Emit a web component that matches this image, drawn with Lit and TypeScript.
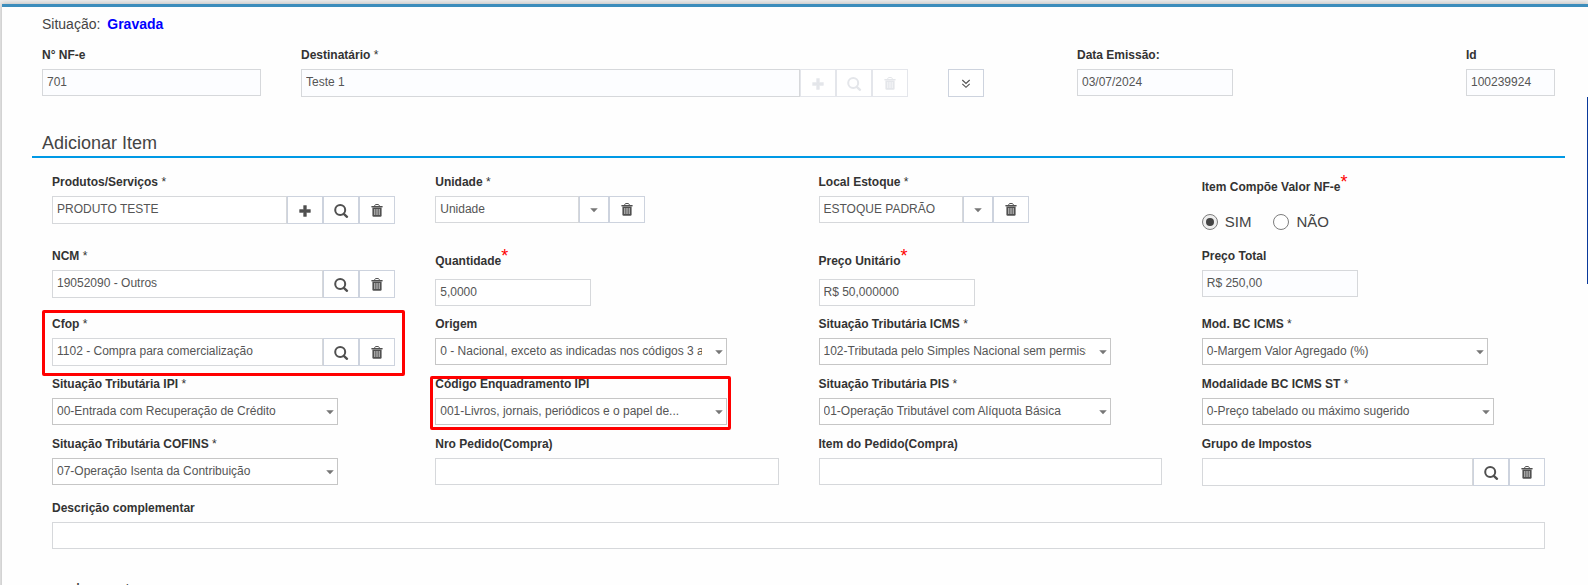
import { LitElement, html, css, svg, nothing, TemplateResult } from "lit";
import { customElement } from "lit/decorators.js";
import { classMap } from "lit/directives/class-map.js";

type IconName = "plus" | "search" | "trash" | "caret" | "down";

const icons: Record<IconName, TemplateResult> = {
  plus: svg`<path d="M6.6 2.6h2.8v4h4v2.8h-4v4H6.6v-4h-4V6.6h4z" fill="currentColor" stroke="currentColor" stroke-width=".5" stroke-linejoin="round"/>`,
  search: svg`<circle cx="7.2" cy="7" r="5" fill="none" stroke="currentColor" stroke-width="2"/><path d="M10.8 10.8l3.2 3" stroke="currentColor" stroke-width="2.4" stroke-linecap="round"/>`,
  trash: svg`<path d="M5.6 3.2C5.6 1.8 6.4 1.5 8 1.5s2.4.3 2.4 1.7" fill="none" stroke="currentColor" stroke-width="1"/><path d="M2.4 3h11.2v1.4H2.4z" fill="currentColor"/><path d="M3.4 4.4h9.2v8.2q0 1.2-1.2 1.2H4.6q-1.2 0-1.2-1.2z" fill="currentColor"/><path d="M5.6 6v6M7.2 6v6M8.8 6v6M10.4 6v6" stroke="#fff" stroke-width=".7" opacity=".8"/>`,
  caret: svg`<path d="M4.2 6.2h7.6L8 10.2z" fill="currentColor"/>`,
  down: svg`<path d="M4.3 4l3.7 3.5L11.7 4M4.3 7.8l3.7 3.5 3.7-3.5" fill="none" stroke="currentColor" stroke-width="1.1"/>`,
};

const icon = (name: IconName) =>
  html`<svg class="icon" viewBox="0 0 16 16" aria-hidden="true">${icons[name]}</svg>`;

const names: Record<IconName, string> = {
  plus: "Adicionar",
  search: "Pesquisar",
  trash: "Limpar",
  caret: "Abrir lista",
  down: "Mais detalhes",
};

interface Field {
  id: string;
  label: string;
  value?: string;
  star?: "plain" | "red";
  kind?: "text" | "select" | "radio";
  size?: string;
  buttons?: IconName[];
  readonly?: boolean;
  disabled?: boolean;
  mark?: "wide" | "tight";
}

const header: Field[] = [
  { id: "nfe", label: "N° NF-e", value: "701", readonly: true },
  { id: "dest", label: "Destinatário", star: "plain", value: "Teste 1", readonly: true, disabled: true, buttons: ["plus", "search", "trash"] },
  { id: "data", label: "Data Emissão:", value: "03/07/2024", readonly: true, size: "short" },
  { id: "id", label: "Id", value: "100239924", readonly: true },
];

const fields: Field[] = [
  { id: "produto", label: "Produtos/Serviços", star: "plain", value: "PRODUTO TESTE", buttons: ["plus", "search", "trash"] },
  { id: "unidade", label: "Unidade", star: "plain", value: "Unidade", size: "combo", buttons: ["caret", "trash"] },
  { id: "local", label: "Local Estoque", star: "plain", value: "ESTOQUE PADRÃO", size: "combo", buttons: ["caret", "trash"] },
  { id: "compoe", label: "Item Compõe Valor NF-e", star: "red", kind: "radio" },
  { id: "ncm", label: "NCM", star: "plain", value: "19052090 - Outros", buttons: ["search", "trash"] },
  { id: "qtd", label: "Quantidade", star: "red", value: "5,0000", size: "short" },
  { id: "preco", label: "Preço Unitário", star: "red", value: "R$ 50,000000", size: "short" },
  { id: "total", label: "Preço Total", value: "R$ 250,00", size: "short", readonly: true },
  { id: "cfop", label: "Cfop", star: "plain", value: "1102 - Compra para comercialização", buttons: ["search", "trash"], mark: "wide" },
  { id: "origem", label: "Origem", kind: "select", size: "large", value: "0 - Nacional, exceto as indicadas nos códigos 3 a 5" },
  { id: "icms", label: "Situação Tributária ICMS", star: "plain", kind: "select", size: "large", value: "102-Tributada pelo Simples Nacional sem permissão de crédito" },
  { id: "modbc", label: "Mod. BC ICMS", star: "plain", kind: "select", size: "medium", value: "0-Margem Valor Agregado (%)" },
  { id: "ipi", label: "Situação Tributária IPI", star: "plain", kind: "select", size: "medium", value: "00-Entrada com Recuperação de Crédito" },
  { id: "enq", label: "Código Enquadramento IPI", kind: "select", size: "large", value: "001-Livros, jornais, periódicos e o papel de...", mark: "tight" },
  { id: "pis", label: "Situação Tributária PIS", star: "plain", kind: "select", size: "large", value: "01-Operação Tributável com Alíquota Básica" },
  { id: "modst", label: "Modalidade BC ICMS ST", star: "plain", kind: "select", size: "large", value: "0-Preço tabelado ou máximo sugerido" },
  { id: "cofins", label: "Situação Tributária COFINS", star: "plain", kind: "select", size: "medium", value: "07-Operação Isenta da Contribuição" },
  { id: "pedido", label: "Nro Pedido(Compra)" },
  { id: "itempedido", label: "Item do Pedido(Compra)" },
  { id: "grupo", label: "Grupo de Impostos", buttons: ["search", "trash"] },
];

@customElement("app-root")
export class AppRoot extends LitElement {
  static styles = css`
    :host {
      display: block;
      box-sizing: border-box;
      position: relative;
      height: 100vh;
      overflow: hidden;
      padding: 4px 0 0 2px;
      background: #ececec;
      color: #333;
      font: 12px/16px "Liberation Sans", Arial, sans-serif;
    }
    * { box-sizing: border-box; }
    .panel {
      min-height: 100%;
      border-top: 3px solid #3c8dbc;
      background: #fefefe;
      box-shadow: 0 0 5px rgba(0, 0, 0, 0.25);
      padding: 7px 23px 0 30px;
    }
    .status { margin: 0 10px; font-size: 14px; line-height: 20px; color: #444; }
    .status strong { color: #0000ff; margin-left: 3px; }
    .head {
      display: grid;
      grid-template-columns: 259fr 647fr 129fr 389fr 89fr;
      margin: 13px 10px 0;
    }
    .head > .field:nth-child(-n + 2) { padding-right: 40px; }
    .toggle { padding-top: 22px; }
    .title {
      margin: 34px 0 0;
      padding: 0 10px 1px;
      border-bottom: 2px solid #0099e5;
      font-size: 18px;
      line-height: 24px;
      font-weight: 400;
      color: #444;
    }
    .grid {
      display: grid;
      grid-template-columns: repeat(4, minmax(0, 1fr));
      gap: 10px 40px;
      grid-auto-rows: minmax(50px, auto);
      margin: 16px 20px 14px;
    }
    .notes { margin: 0 20px; }
    .field { position: relative; display: flex; flex-direction: column; gap: 6px; min-width: 0; }
    .caption { display: flex; }
    .caption.raised { height: 25px; }
    .name { font-weight: 700; }
    .name.low { padding-top: 5px; }
    .plain { font-weight: 400; }
    .red { color: #f00; font-size: 18px; }
    .group { display: flex; }
    .text, .select {
      flex: 1;
      width: 100%;
      min-width: 0;
      height: 27px;
      margin: 0;
      padding: 0 4px 2px;
      border: 1px solid #d6d8db;
      border-radius: 0;
      background: #fff;
      color: #555;
      font: inherit;
      outline: none;
    }
    .tall .text { height: 28px; }
    .text.locked { background: #fcfdff; }
    .combo .text { flex: none; width: 144px; height: 27px; }
    .combo .btn { height: 27px; }
    .short { max-width: 156px; }
    .medium { max-width: 286px; }
    .large { max-width: 292px; }
    .select { appearance: none; grid-area: 1 / 1; border-color: #c6c6c6; padding-right: 24px; }
    .pick { display: grid; align-items: center; color: #777; }
    .pick .icon { grid-area: 1 / 1; justify-self: end; pointer-events: none; }
    .btn {
      flex: none;
      display: flex;
      align-items: center;
      justify-content: center;
      width: 36px;
      height: 28px;
      padding: 1px 0 0;
      border: 1px solid #cdd3de;
      border-radius: 0;
      background: #fff;
      color: #505050;
    }
    .btn.caret { width: 30px; color: #777; }
    .btn:disabled { color: #e4e6ea; border-color: #e4e6eb; }
    .icon { width: 16px; height: 16px; display: block; }
    .radios { display: flex; gap: 22px; padding: 7px 0 6px; }
    .option { display: flex; align-items: center; gap: 7px; font-size: 15px; line-height: 20px; color: #444; }
    .radio {
      appearance: none;
      display: grid;
      place-content: center;
      width: 16px;
      height: 16px;
      margin: 0;
      border: 1px solid #7d7d7d;
      border-radius: 50%;
      background: #fff;
    }
    .radio:checked { background: #eee; }
    .radio:checked::before { content: ""; width: 8px; height: 8px; border-radius: 50%; background: #444; }
    .mark { position: absolute; border: 3px solid #f00; border-radius: 2px; pointer-events: none; }
    .mark.wide { inset: -6px -10px -10px; }
    .mark.tight { inset: 0 auto -4px -5px; width: 301px; max-width: calc(100% + 10px); }
    .next { margin: 29px 0 0; font-size: 18px; line-height: 24px; font-weight: 400; color: #444; }
    .edge { position: absolute; right: 0; top: 97px; width: 1px; height: 187px; background: #0a3a9c; }
  `;

  private caption(f: Field) {
    const red = f.star === "red";
    return html`<div class=${classMap({ caption: true, raised: red })}>
      <label class=${classMap({ name: true, low: red })} for=${f.id}>${f.label}${f.star === "plain" ? html` <span class="plain">*</span>` : nothing}</label>
      ${red ? html`<span class="red">*</span>` : nothing}
    </div>`;
  }

  private control(f: Field) {
    if (f.kind === "radio") {
      return html`<div class="radios">
        <label class="option"><input class="radio" type="radio" name=${f.id} id=${f.id} checked />SIM</label>
        <label class="option"><input class="radio" type="radio" name=${f.id} />NÃO</label>
      </div>`;
    }
    if (f.kind === "select") {
      return html`<div class="pick ${f.size ?? ""}">
        <select class="select" id=${f.id}><option>${f.value}</option></select>
        ${icon("caret")}
      </div>`;
    }
    return html`<div class="group ${f.size ?? ""} ${f.buttons ? "tall" : ""}">
      <input class=${classMap({ text: true, locked: !!f.readonly })} id=${f.id} .value=${f.value ?? ""} ?readonly=${f.readonly} />
      ${(f.buttons ?? []).map((b) => this.button(b, f.disabled))}
    </div>`;
  }

  private button(name: IconName, disabled = false) {
    return html`<button class="btn ${name}" type="button" aria-label=${names[name]} ?disabled=${disabled}>${icon(name)}</button>`;
  }

  private field(f: Field) {
    return html`<div class="field">
      ${this.caption(f)}${this.control(f)}
      ${f.mark ? html`<div class="mark ${f.mark}"></div>` : nothing}
    </div>`;
  }

  render() {
    return html`<main class="panel">
        <div class="status">Situação: <strong>Gravada</strong></div>
        <div class="head">
          ${header.slice(0, 2).map((f) => this.field(f))}
          <div class="toggle">${this.button("down")}</div>
          ${header.slice(2).map((f) => this.field(f))}
        </div>
        <h2 class="title">Adicionar Item</h2>
        <div class="grid">${fields.map((f) => this.field(f))}</div>
        <div class="notes">${this.field({ id: "desc", label: "Descrição complementar" })}</div>
        <h2 class="next">complementar</h2>
      </main>
      <div class="edge"></div>`;
  }
}
